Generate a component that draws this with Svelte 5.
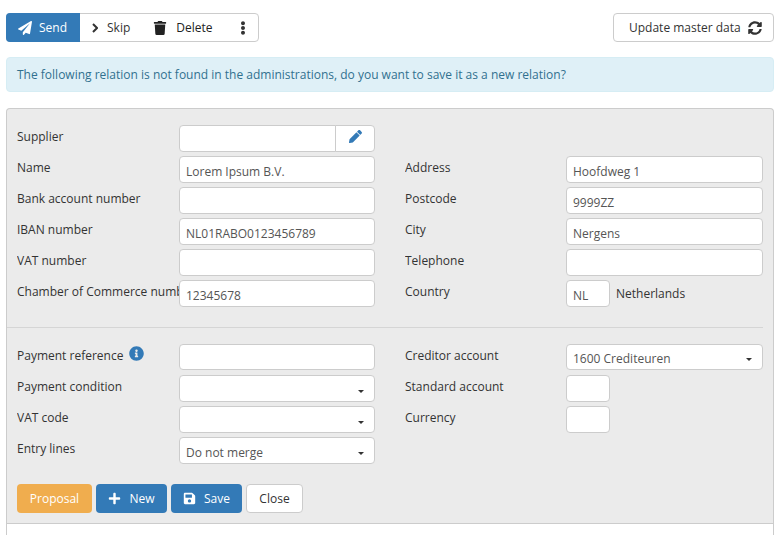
<script>
	const paths = {
		send: 'M476 3.2L12.5 270.6c-18.1 10.4-15.8 35.6 2.2 43.2L121 358.4l287.3-253.2c5.5-4.9 13.3 2.6 8.6 8.3L176 407v80.5c0 23.6 28.5 32.9 42.5 15.8L282 426l124.6 52.2c14.2 6 30.4-2.9 33-18.2l72-432C515 7.8 493.3-6.8 476 3.2z',
		trash: 'M432 32H312l-9.4-18.7A24 24 0 0 0 281.1 0H166.8a23.72 23.72 0 0 0-21.4 13.3L136 32H16A16 16 0 0 0 0 48v32a16 16 0 0 0 16 16h416a16 16 0 0 0 16-16V48a16 16 0 0 0-16-16zM53.2 467a48 48 0 0 0 47.9 45h245.8a48 48 0 0 0 47.9-45L416 128H32z',
		dots: 'M96 184c39.8 0 72 32.2 72 72s-32.2 72-72 72-72-32.2-72-72 32.2-72 72-72zM24 80c0 39.8 32.2 72 72 72s72-32.2 72-72S135.8 8 96 8 24 40.2 24 80zm0 352c0 39.8 32.2 72 72 72s72-32.2 72-72-32.2-72-72-72-72 32.2-72 72z',
		sync: 'M370.72 133.28C339.458 104.008 298.888 87.962 255.848 88c-77.458.068-144.328 53.178-162.791 126.85-1.344 5.363-6.122 9.15-11.651 9.15H24.103c-7.498 0-13.194-6.807-11.807-14.176C33.933 94.924 134.813 8 256 8c66.448 0 126.791 26.136 171.315 68.685L463.03 40.97C478.149 25.851 504 36.559 504 57.941V192c0 13.255-10.745 24-24 24H345.941c-21.382 0-32.09-25.851-16.971-40.971l41.75-41.749zM32 296h134.059c21.382 0 32.09 25.851 16.971 40.971l-41.75 41.75c31.262 29.273 71.835 45.319 114.876 45.28 77.418-.07 144.315-53.144 162.787-126.849 1.344-5.363 6.122-9.15 11.651-9.15h57.304c7.498 0 13.194 6.807 11.807 14.176C478.067 417.076 377.187 504 256 504c-66.448 0-126.791-26.136-171.315-68.685L48.97 471.03C33.851 486.149 8 475.441 8 454.059V320c0-13.255 10.745-24 24-24z',
		pencil: 'M497.9 142.1l-46.1 46.1c-4.7 4.7-12.3 4.7-17 0l-111-111c-4.7-4.7-4.7-12.3 0-17l46.1-46.1c18.7-18.7 49.1-18.7 67.9 0l60.1 60.1c18.8 18.7 18.8 49.1 0 67.9zM284.2 99.8L21.6 362.4.4 483.9c-2.9 16.4 11.4 30.6 27.8 27.8l121.5-21.3 262.6-262.6c4.7-4.7 4.7-12.3 0-17l-111-111c-4.8-4.7-12.4-4.7-17.1 0z',
		info: 'M256 8C119 8 8 119.1 8 256c0 137 111 248 248 248s248-111 248-248C504 119.1 393 8 256 8zm0 110c23.2 0 42 18.8 42 42s-18.8 42-42 42-42-18.8-42-42 18.8-42 42-42zm56 254c0 6.6-5.4 12-12 12h-88c-6.6 0-12-5.4-12-12v-24c0-6.6 5.4-12 12-12h12v-64h-12c-6.6 0-12-5.4-12-12v-24c0-6.6 5.4-12 12-12h64c6.6 0 12 5.4 12 12v100h12c6.6 0 12 5.4 12 12v24z',
		plus: 'M416 208H272V64c0-17.67-14.33-32-32-32h-32c-17.67 0-32 14.33-32 32v144H32c-17.67 0-32 14.33-32 32v32c0 17.67 14.33 32 32 32h144v144c0 17.67 14.33 32 32 32h32c17.67 0 32-14.33 32-32V304h144c17.67 0 32-14.33 32-32v-32c0-17.67-14.33-32-32-32z',
		save: 'M433.941 129.941l-83.882-83.882A48 48 0 0 0 316.118 32H48C21.49 32 0 53.49 0 80v352c0 26.51 21.49 48 48 48h352c26.51 0 48-21.49 48-48V163.882a48 48 0 0 0-14.059-33.941zM224 416c-35.346 0-64-28.654-64-64 0-35.346 28.654-64 64-64s64 28.654 64 64c0 35.346-28.654 64-64 64zm96-304.52V212c0 6.627-5.373 12-12 12H76c-6.627 0-12-5.373-12-12V108c0-6.627 5.373-12 12-12h228.52c3.183 0 6.235 1.264 8.485 3.515l3.48 3.48A11.996 11.996 0 0 1 320 111.48z'
	};
</script>

{#snippet icon(name, size, box = 512)}
	<svg class="icon" width={size} height={size} viewBox="0 0 {box} 512" fill="currentColor" aria-hidden="true"><path d={paths[name]} /></svg>
{/snippet}

{#snippet field(label, value = '', kind = '')}
	<span class="label">{label}</span>
	<input class="input {kind}" type="text" {value} />
{/snippet}

{#snippet select(label, value = '')}
	<span class="label">{label}</span>
	<div class="input select"><span>{value}</span><i class="caret"></i></div>
{/snippet}

<div class="page">
	<div class="toolbar">
		<div class="btn-group">
			<button class="send">{@render icon('send', 14)}Send</button>
			<button class="skip">
				<svg class="icon" width="6" height="10" viewBox="0 0 6 10" fill="none" stroke="currentColor" stroke-width="2"><path d="M1 1l4 4-4 4" /></svg>
				Skip
			</button>
			<button class="delete">{@render icon('trash', 14, 448)}Delete</button>
			<button class="more">{@render icon('dots', 14, 192)}</button>
		</div>
		<button class="update">Update master data {@render icon('sync', 14)}</button>
	</div>

	<div class="alert">The following relation is not found in the administrations, do you want to save it as a new relation?</div>

	<div class="panel">
		<div class="form">
			<span class="label">Supplier</span>
			<div class="input-group">
				<input class="input" type="text" />
				<button class="addon">{@render icon('pencil', 13)}</button>
			</div>
			<span></span><span></span>

			{@render field('Name', 'Lorem Ipsum B.V.')}
			{@render field('Address', 'Hoofdweg 1')}
			{@render field('Bank account number')}
			{@render field('Postcode', '9999ZZ')}
			{@render field('IBAN number', 'NL01RABO0123456789')}
			{@render field('City', 'Nergens')}
			{@render field('VAT number')}
			{@render field('Telephone')}
			{@render field('Chamber of Commerce number', '12345678')}
			<span class="label">Country</span>
			<div class="country">
				<input class="input short" type="text" value="NL" />
				<span>Netherlands</span>
			</div>
		</div>

		<hr />

		<div class="form">
			<span class="label">Payment reference {@render icon('info', 15)}</span>
			<input class="input low" type="text" />
			<span class="label">Creditor account</span>
			<div class="input select low"><span>1600 Crediteuren</span><i class="caret"></i></div>

			{@render select('Payment condition')}
			{@render field('Standard account', '', 'short')}
			{@render select('VAT code')}
			{@render field('Currency', '', 'short')}
			{@render select('Entry lines', 'Do not merge')}
			<span></span><span></span>
		</div>

		<div class="actions">
			<button class="proposal">Proposal</button>
			<button class="primary">{@render icon('plus', 13, 448)}New</button>
			<button class="primary">{@render icon('save', 13, 448)}Save</button>
			<button class="close">Close</button>
		</div>

		<div class="below"></div>
	</div>
</div>

<style>
	:global(body) {
		overflow: hidden;
		background: #fff;
	}
	.page {
		height: 535px;
		overflow: hidden;
		padding: 13px 6px 0;
		box-sizing: border-box;
		font: 12px/17px 'Open Sans', sans-serif;
		color: #333;
	}
	button {
		font: inherit;
		color: inherit;
		cursor: pointer;
	}
	.icon {
		flex: none;
	}
	.toolbar {
		display: flex;
		justify-content: space-between;
	}
	.btn-group {
		display: flex;
		width: 253px;
		height: 29px;
		box-sizing: border-box;
		border: 1px solid #ccc;
		border-radius: 4px;
		background: #fff;
	}
	.btn-group button {
		display: flex;
		align-items: center;
		border: 0;
		background: none;
		padding: 0;
	}
	.btn-group .send {
		width: 74px;
		margin: -1px 0 -1px -1px;
		padding-left: 12px;
		gap: 7px;
		background: #337ab7;
		color: #fff;
		border-radius: 4px 0 0 4px;
	}
	.btn-group .skip {
		margin-left: 12px;
		gap: 9px;
	}
	.btn-group .delete {
		margin-left: 23px;
		gap: 9px;
		color: #222;
	}
	.btn-group .more {
		margin-left: 23px;
	}
	.update {
		display: flex;
		align-items: center;
		gap: 7px;
		width: 161px;
		height: 29px;
		box-sizing: border-box;
		padding: 0 0 0 15px;
		border: 1px solid #ccc;
		border-radius: 4px;
		background: #fff;
		white-space: nowrap;
	}
	.alert {
		margin-top: 15px;
		height: 35px;
		box-sizing: border-box;
		padding: 8px 10px;
		border: 1px solid #d6edf4;
		border-radius: 4px;
		background: #dff0f7;
		color: #31708f;
		white-space: nowrap;
	}
	.panel {
		margin-top: 16px;
		padding: 16px 0 0;
		border: 1px solid #ccc;
		border-bottom: 0;
		border-radius: 4px 4px 0 0;
		background: #ebebeb;
	}
	.form {
		display: grid;
		grid-template-columns: 162px 196px 161px 197px;
		column-gap: 0;
		row-gap: 4px;
		padding: 0 10px;
		grid-auto-rows: 27px;
	}
	.form > :nth-child(4n + 3) {
		margin-left: 30px;
	}
	.form {
		grid-template-columns: 162px 196px 191px 197px;
	}
	.label {
		display: flex;
		align-items: flex-start;
		gap: 6px;
		padding-top: 3px;
		white-space: nowrap;
		overflow: hidden;
	}
	.label .icon {
		color: #337ab7;
		margin-top: -1px;
	}
	.input {
		display: block;
		width: 100%;
		height: 27px;
		box-sizing: border-box;
		margin: 0;
		padding: 3px 6px 0;
		border: 1px solid #ccc;
		border-radius: 4px;
		background: #fff;
		font: inherit;
		color: #555;
		outline: 0;
	}
	.input.short {
		width: 44px;
	}
	.input.low {
		height: 26px;
	}
	.select {
		display: flex;
		align-items: center;
		justify-content: space-between;
		padding-right: 10px;
	}
	.caret {
		width: 0;
		height: 0;
		margin-top: 2px;
		border: 3.5px solid transparent;
		border-top-color: #333;
		border-bottom: 0;
	}
	.input-group {
		display: flex;
	}
	.input-group .input {
		flex: 1;
		min-width: 0;
		border-radius: 4px 0 0 4px;
	}
	.addon {
		width: 40px;
		height: 27px;
		margin-left: -1px;
		padding: 0;
		border: 1px solid #ccc;
		border-radius: 0 4px 4px 0;
		background: #fff;
		color: #337ab7;
	}
	.country {
		display: flex;
		align-items: center;
		gap: 6px;
	}
	hr {
		height: 1px;
		margin: 20px 10px 16px 0;
		border: 0;
		background: #d5d5d5;
	}
	.actions {
		display: flex;
		gap: 4px;
		padding: 20px 10px 10px;
	}
	.actions button {
		display: flex;
		align-items: center;
		justify-content: center;
		height: 29px;
		box-sizing: border-box;
		padding: 0;
		border: 1px solid transparent;
		border-radius: 4px;
		gap: 8px;
	}
	.actions .proposal {
		width: 75px;
		background: #f0ad4e;
		color: #fff;
	}
	.actions .primary {
		width: 71px;
		background: #337ab7;
		color: #fff;
	}
	.actions .close {
		width: 57px;
		background: #fff;
		border-color: #ccc;
	}
	.below {
		height: 40px;
		background: #fff;
		border-top: 1px solid #ccc;
	}
</style>
